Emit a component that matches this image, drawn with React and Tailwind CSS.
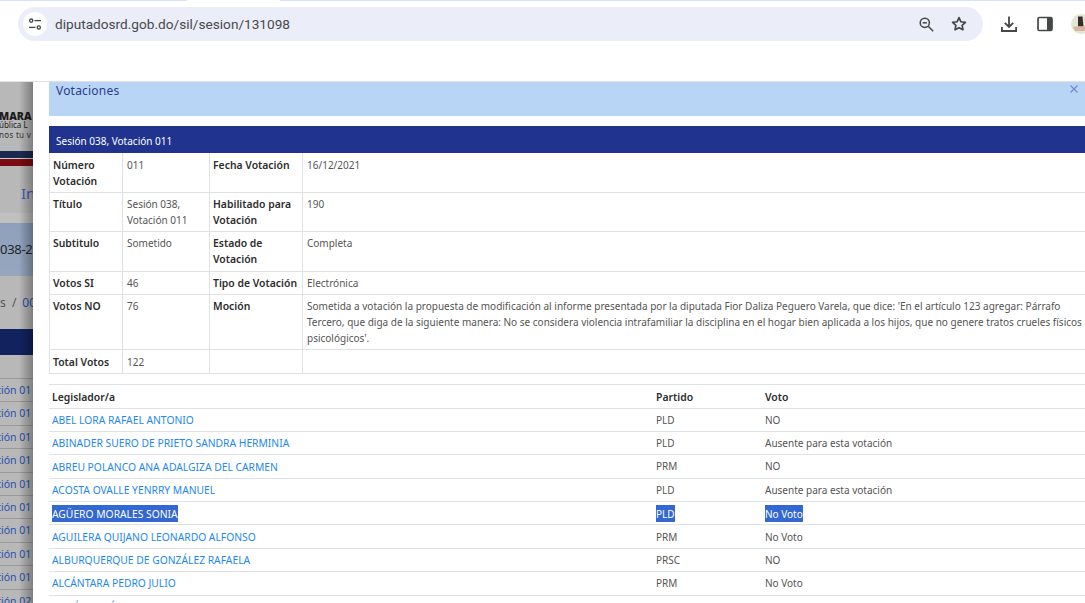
import React from "react";

function SideRow({ children }) {
  return (
    <div className="h-[23.4px] border-b border-[#999999] text-[#2550ae] text-[10.5px] leading-[22px] whitespace-nowrap -ml-[4px]">{children}</div>
  );
}

const info = [
  { h: "h-[39px]", p: "pt-[4px]", a: "Número Votación", b: "011", c: "Fecha Votación", d: "16/12/2021" },
  { h: "h-[39px]", p: "pt-[3px]", a: "Título", b: "Sesión 038, Votación 011", c: "Habilitado para Votación", d: "190" },
  { h: "h-[40px]", p: "pt-[3px]", a: "Subtitulo", b: "Sometido", c: "Estado de Votación", d: "Completa" },
  { h: "h-[23px]", p: "pt-[3px]", a: "Votos SI", b: "46", c: "Tipo de Votación", d: "Electrónica" },
  { h: "h-[55px]", p: "pt-[3px]", a: "Votos NO", b: "76", c: "Moción", d: "Sometida a votación la propuesta de modificación al informe presentada por la diputada Fior Daliza Peguero Varela, que dice: 'En el artículo 123 agregar: Párrafo Tercero, que diga de la siguiente manera: No se considera violencia intrafamiliar la disciplina en el hogar bien aplicada a los hijos, que no genere tratos crueles físicos o psicológicos'." },
  { h: "h-[24px]", p: "pt-[4px]", a: "Total Votos", b: "122", c: "", d: "" },
];

const voters = [
  ["ABEL LORA RAFAEL ANTONIO", "PLD", "NO"],
  ["ABINADER SUERO DE PRIETO SANDRA HERMINIA", "PLD", "Ausente para esta votación"],
  ["ABREU POLANCO ANA ADALGIZA DEL CARMEN", "PRM", "NO"],
  ["ACOSTA OVALLE YENRRY MANUEL", "PLD", "Ausente para esta votación"],
  ["AGÜERO MORALES SONIA", "PLD", "No Voto", true],
  ["AGUILERA QUIJANO LEONARDO ALFONSO", "PRM", "No Voto"],
  ["ALBURQUERQUE DE GONZÁLEZ RAFAELA", "PRSC", "NO"],
  ["ALCÁNTARA PEDRO JULIO", "PRM", "No Voto"],
  ["ALMÁNZAR ÁLVAREZ", "PRM", "NO"],
];

function Sel({ on, children }) {
  return on ? <span className="bg-[#3367d1] text-white py-[1.5px]">{children}</span> : children;
}

export default function App() {
  return (
    <div className="w-[1085px] h-[603px] overflow-hidden bg-white flex flex-col font-['Noto_Sans','Open_Sans',sans-serif] text-[#212529]">
      {/* Browser chrome */}
      <div className="h-[82px] shrink-0 border-b border-[#dfe1e5] bg-white relative">
        <div className="absolute top-0 left-0 right-0 h-px flex">
          <div className="w-[187px] bg-[#d3e3fd]" />
          <div className="w-[93px]" />
          <div className="flex-1 bg-[#d3e3fd]" />
        </div>
        <div className="flex items-start pt-[7px] pl-[18px]">
          <div className="w-[965px] shrink-0 h-[34px] rounded-full bg-[#ebeef8] flex items-center pl-[5px] pr-[16px]">
            <div className="w-[24px] h-[24px] rounded-full bg-white flex items-center justify-center">
              <svg width="14" height="14" viewBox="0 0 14 14" fill="none" stroke="#444746" strokeWidth="1.3">
                <circle cx="3.2" cy="3.6" r="1.6" />
                <path d="M6.5 3.6h6.5" />
                <circle cx="10.8" cy="10.4" r="1.6" />
                <path d="M1 10.4h6.5" />
              </svg>
            </div>
            <span className="ml-[8px] text-[13.65px] text-[#474a4d] font-['Roboto',sans-serif]">diputadosrd.gob.do/sil/sesion/131098</span>
            <div className="ml-auto flex items-center gap-[17px]">
              <svg width="15" height="15" viewBox="0 0 15 15" fill="none" stroke="#444746" strokeWidth="1.5">
                <circle cx="5.8" cy="5.8" r="4.6" />
                <path d="M9.2 9.2l5 5" />
                <path d="M3.6 5.8h4.4" />
              </svg>
              <svg width="16" height="16" viewBox="0 0 18 18" fill="none" stroke="#444746" strokeWidth="1.9" strokeLinejoin="round">
                <path d="M9 1.8l2.2 4.7 5 .6-3.7 3.4 1 5L9 13.1l-4.5 2.4 1-5L1.8 7.1l5-.6z" />
              </svg>
            </div>
          </div>
          <div className="ml-[18px] flex items-center mt-[7px]">
            <svg width="16" height="16" viewBox="0 0 16 16" fill="none" stroke="#444746" strokeWidth="1.8" className="shrink-0">
              <path d="M8 0.5v10.5M3.8 6.8L8 11l4.2-4.2" />
              <path d="M0.9 11v4h14.2v-4" />
            </svg>
            <svg width="16" height="16" viewBox="0 0 16 16" className="ml-[20px] shrink-0">
              <rect x="1" y="1.5" width="14" height="13" rx="1.5" fill="none" stroke="#444746" strokeWidth="1.7" />
              <rect x="10" y="1.5" width="5" height="13" fill="#444746" />
            </svg>
            <svg width="20" height="20" viewBox="0 0 20 20" className="ml-[18px] shrink-0">
              <circle cx="10" cy="10" r="10" fill="#e3e6d2" />
              <path d="M7 2.5h4.5l1 10H7z" fill="#3a2a2a" />
              <path d="M2 12.5h13v4.5H4z" fill="#d8b4a4" />
            </svg>
          </div>
        </div>
      </div>

      <div className="flex-1 flex min-h-0">
        {/* Dimmed page behind the modal */}
        <div className="w-[33px] shrink-0 relative overflow-hidden bg-[#b8b8b8]">
          <div className="h-[69px] pt-[29px] text-[#1c1c1c] leading-none whitespace-nowrap">
            <div className="font-black text-[10.5px] -ml-[1px] h-[10px]">MARA</div>
            <div className="text-[8px] h-[10px] -ml-[1px]">ública L</div>
            <div className="text-[8px] -ml-[1px] tracking-[0.3px] text-[#333]">nos tu v</div>
          </div>
          <div className="h-[7px] bg-[#1b2a52]" />
          <div className="h-px bg-[#cfcfcf]" />
          <div className="h-[7px] bg-[#7c0a12]" />
          <div className="h-[47px] pt-[17px] pl-[21px] text-[15px] text-[#3f5fc0] leading-[20px]">In</div>
          <div className="h-[10px] bg-[#c0c0c0]" />
          <div className="h-[53px] bg-gradient-to-b from-[#8ea0bc] to-[#97a6bd] text-[13px] text-[#1c2430] leading-[53px] whitespace-nowrap tracking-[-0.3px]">038-2</div>
          <div className="h-[53px] pt-[17px] text-[12px] text-[#2550ae] whitespace-nowrap leading-[19px]"><span className="text-[#555]">s</span> <span className="text-[#555] ml-[3px]">/</span><span className="ml-[6px]">00</span></div>
          <div className="h-[26px] bg-[#12225f]" />
          <div className="h-[24px] border-b border-[#999999]" />
          <div className="flex flex-col">
            {["ción 01","ción 01","ción 01","ción 01","ción 01","ción 01","ción 01","ción 01","ción 01","ción 02"].map((t, i) => (
              <SideRow key={i}>{t}</SideRow>
            ))}
          </div>
          <div className="absolute top-0 bottom-0 right-0 w-[14px] bg-gradient-to-r from-transparent to-[#00000050]" />
        </div>

        {/* Modal */}
        <div className="flex-1 bg-white pl-[16px] min-w-0 overflow-hidden">
          <div className="w-[1036px]">
            <div className="h-[34px] bg-[#b9d5f6] pl-[7px] pr-[7px] pt-[1px] flex justify-between text-[#2c3c8c] text-[12px] leading-[16px]">
              <span className="tracking-[0.2px]">Votaciones</span>
              <svg width="8" height="8" viewBox="0 0 8 8" className="mt-[2px]" stroke="#6f86d6" strokeWidth="1.1">
                <path d="M.5.5l7 7M7.5.5l-7 7" />
              </svg>
            </div>
            <div className="mt-[10px] h-[27px] bg-[#20348f] text-white text-[10px] leading-[30px] pl-[7px]">Sesión 038, Votación 011</div>

            <table className="table-fixed border-collapse w-[1052px] text-[10px] leading-[16px] text-[#555]">
              <colgroup>
                <col className="w-[73px]" />
                <col className="w-[87px]" />
                <col className="w-[93px]" />
                <col />
              </colgroup>
              <tbody>
                {info.map((r) => (
                  <tr key={r.a} className={r.h}>
                    <td className={`border border-[#dee2e6] border-t-0 px-[3px] align-top font-semibold text-[10.4px] text-[#2d2d2d] ${r.p}`}>{r.a}</td>
                    <td className={`border border-[#dee2e6] border-t-0 px-[4px] align-top ${r.p}`}>{r.b}</td>
                    <td className={`border border-[#dee2e6] border-t-0 px-[3px] align-top font-semibold text-[10.4px] text-[#2d2d2d] ${r.p}`}>{r.c}</td>
                    <td className={`border border-[#dee2e6] border-t-0 px-[4px] align-top ${r.p}`}>{r.d}</td>
                  </tr>
                ))}
              </tbody>
            </table>

            <table className="table-fixed border-collapse w-[1036px] mt-[10px] text-[10px] text-[#555]">
              <colgroup>
                <col className="w-[604px]" />
                <col className="w-[109px]" />
                <col />
              </colgroup>
              <thead>
                <tr className="h-[24px] border-t border-b border-[#dee2e6] font-semibold text-[10.4px] text-[#2d2d2d]">
                  <td className="pl-[3px] pt-[3px]">Legislador/a</td>
                  <td className="pl-[3px] pt-[3px]">Partido</td>
                  <td className="pl-[3px] pt-[3px]">Voto</td>
                </tr>
              </thead>
              <tbody>
                {voters.map(([n, p, v, on]) => (
                  <tr key={n} className="h-[23.4px] border-b border-[#dee2e6]">
                    <td className="pl-[3px] pt-[1.5px] text-[10.3px] text-[#1e88f0]"><Sel on={on}>{n}</Sel></td>
                    <td className="pl-[3px] pt-[1px]"><Sel on={on}>{p}</Sel></td>
                    <td className="pl-[3px] pt-[1px]"><Sel on={on}>{v}</Sel></td>
                  </tr>
                ))}
              </tbody>
            </table>
          </div>
        </div>
      </div>
    </div>
  );
}
